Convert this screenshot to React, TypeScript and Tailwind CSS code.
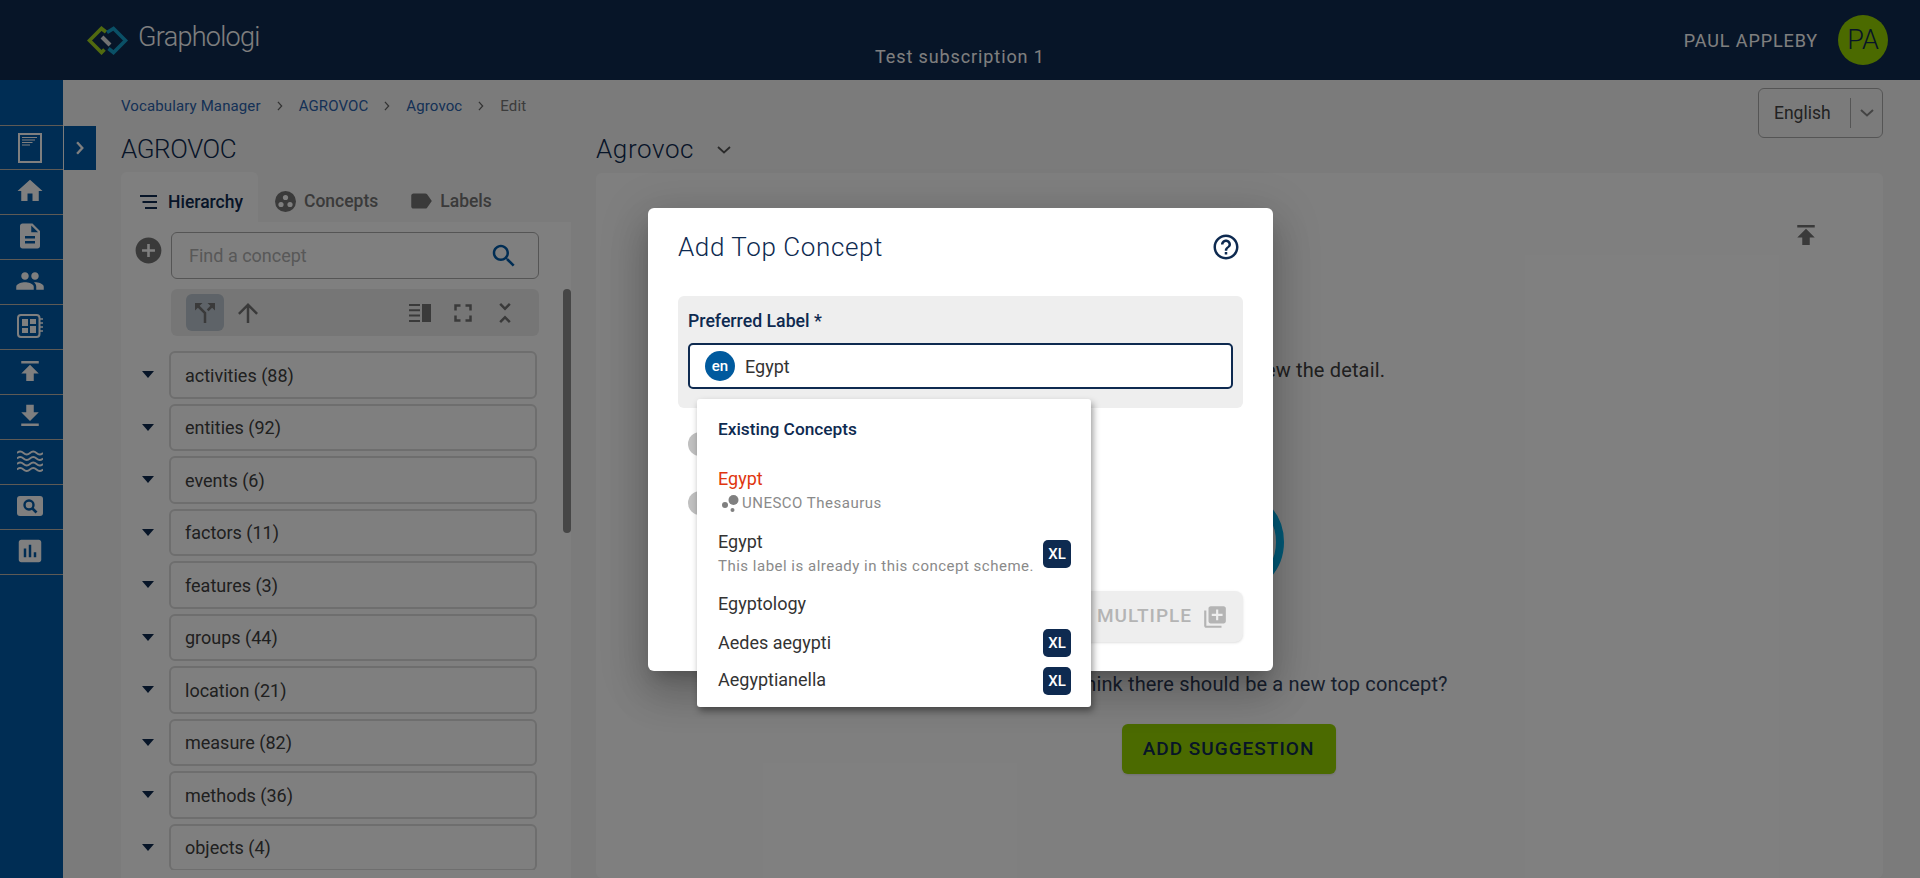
import type { ReactNode } from 'react'

const paths = {
  home: 'M10 20v-6h4v6h5v-8h3L12 3 2 12h3v8z',
  description:
    'M14 2H6c-1.1 0-2 .9-2 2v16c0 1.1.9 2 2 2h12c1.1 0 2-.9 2-2V8l-6-6zm2 16H8v-2h8v2zm0-4H8v-2h8v2zm-3-5V3.5L18.5 9H13z',
  people:
    'M16 11c1.66 0 2.99-1.34 2.99-3S17.66 5 16 5c-1.66 0-3 1.34-3 3s1.34 3 3 3zm-8 0c1.66 0 2.99-1.34 2.99-3S9.66 5 8 5C6.34 5 5 6.34 5 8s1.34 3 3 3zm0 2c-2.33 0-7 1.17-7 3.5V19h14v-2.5c0-2.33-4.67-3.5-7-3.5zm8 0c-.29 0-.62.02-.97.05 1.16.84 1.97 1.97 1.97 3.45V19h6v-2.5c0-2.33-4.67-3.5-7-3.5z',
  publish: 'M5 4v2h14V4H5zm0 10h4v6h6v-6h4l-7-7-7 7z',
  download: 'M19 9h-4V3H9v6H5l7 7 7-7zM5 18v2h14v-2H5z',
  chart:
    'M19 3H5c-1.1 0-2 .9-2 2v14c0 1.1.9 2 2 2h14c1.1 0 2-.9 2-2V5c0-1.1-.9-2-2-2zM9 17H7v-7h2v7zm4 0h-2V7h2v10zm4 0h-2v-4h2v4z',
  split: 'M14 4l2.29 2.29-2.88 2.88 1.42 1.42 2.88-2.88L20 10V4zm-4 0H4v6l2.29-2.29 4.71 4.7V20h2v-8.41l-5.29-5.3z',
  up: 'M4 12l1.41 1.41L11 7.83V20h2V7.83l5.58 5.59L20 12l-8-8-8 8z',
  fullscreen: 'M7 14H5v5h5v-2H7v-3zm-2-4h2V7h3V5H5v5zm12 7h-3v2h5v-5h-2v3zM14 5v2h3v3h2V5h-5z',
  unfold:
    'M7.41 18.59L8.83 20 12 16.83 15.17 20l1.41-1.41L12 14l-4.59 4.59zm9.18-13.17L15.17 4 12 7.17 8.83 4 7.41 5.41 12 10l4.59-4.59z',
  label:
    'M17.63 5.84C17.27 5.33 16.67 5 16 5L5 5.01C3.9 5.01 3 5.9 3 7v10c0 1.1.9 1.99 2 1.99L16 19c.67 0 1.27-.33 1.63-.84L22 12l-4.37-6.16z',
  search:
    'M15.5 14h-.79l-.28-.27C15.41 12.59 16 11.11 16 9.5 16 5.91 13.09 3 9.5 3S3 5.91 3 9.5 5.91 16 9.5 16c1.61 0 3.09-.59 4.23-1.57l.27.28v.79l5 4.99L20.49 19l-4.99-5zm-6 0C7.01 14 5 11.99 5 9.5S7.01 5 9.5 5 14 7.01 14 9.5 11.99 14 9.5 14z',
  add: 'M12 2C6.48 2 2 6.48 2 12s4.48 10 10 10 10-4.48 10-10S17.52 2 12 2zm5 11h-4v4h-2v-4H7v-2h4V7h2v4h4v2z',
  help: 'M11 18h2v-2h-2v2zm1-16C6.48 2 2 6.48 2 12s4.48 10 10 10 10-4.48 10-10S17.52 2 12 2zm0 18c-4.41 0-8-3.59-8-8s3.59-8 8-8 8 3.59 8 8-3.59 8-8 8zm0-14c-2.21 0-4 1.79-4 4h2c0-1.1.9-2 2-2s2 .9 2 2c0 2-3 1.75-3 5h2c0-2.25 3-2.5 3-5 0-2.21-1.79-4-4-4z',
  libraryAdd:
    'M4 6H2v14c0 1.1.9 2 2 2h14v-2H4V6zm16-4H8c-1.1 0-2 .9-2 2v12c0 1.1.9 2 2 2h12c1.1 0 2-.9 2-2V4c0-1.1-.9-2-2-2zm-1 9h-4v4h-2v-4H9V9h4V5h2v4h4v2z',
}

function Icon({ d, className }: { d: string; className?: string }) {
  return (
    <svg viewBox="0 0 24 24" fill="currentColor" className={className}>
      <path d={d} />
    </svg>
  )
}

function DocIcon() {
  return (
    <svg viewBox="0 0 24 30" className="h-[30px] w-6" fill="none" stroke="currentColor">
      <rect x="1" y="1" width="22" height="28" strokeWidth="2" />
      <path d="M4 4.5h15M4 7h13M4 9.5h10.500M4 12h8" strokeWidth="1.200" />
    </svg>
  )
}

function BoardIcon() {
  return (
    <svg viewBox="0 0 26 24" className="h-6 w-[26px]" fill="none">
      <rect x="1" y="1" width="21.500" height="22" rx="3" stroke="currentColor" strokeWidth="2" />
      <path d="M5 5h6v7H5zM5 14h6v5H5zM13 5h6v5h-6zM13 12h6v7h-6z" fill="currentColor" />
      <path d="M23 5h3M23 9h3M23 13h3M23 17h3" stroke="currentColor" strokeWidth="1.500" />
    </svg>
  )
}

function WavesIcon() {
  return (
    <svg viewBox="0 0 26 22" className="h-[22px] w-[26px]" fill="none" stroke="currentColor" strokeWidth="1.800">
      <path d="M0 3q3.250-3 6.500 0t6.500 0 6.500 0 6.500 0" />
      <path d="M0 8.500q3.250-3 6.500 0t6.500 0 6.500 0 6.500 0" />
      <path d="M0 14q3.250-3 6.500 0t6.500 0 6.500 0 6.500 0" />
      <path d="M0 19.500q3.250-3 6.500 0t6.500 0 6.500 0 6.500 0" />
    </svg>
  )
}

function SearchBoxIcon() {
  return (
    <svg viewBox="0 0 26 20" className="h-5 w-[26px]">
      <rect width="26" height="20" rx="3" fill="currentColor" />
      <circle cx="12" cy="9" r="4.500" fill="none" stroke="#005aa8" strokeWidth="2.400" />
      <path d="M15.500 12.500l4 4" stroke="#005aa8" strokeWidth="2.600" />
    </svg>
  )
}

function Logo() {
  return (
    <svg viewBox="0 0 41 29" className="h-[29px] w-[41px]" fill="none" strokeWidth="3.600">
      <path d="M19 6L14.500 2.500 2.500 14.500l12 12 3-3" stroke="#a2d420" />
      <path d="M20 6.500L26.500 2.500l12 12-12 12-5-4" stroke="#14a0cc" />
      <path d="M15 11l8 8" stroke="#e4e4e4" strokeWidth="4" />
    </svg>
  )
}

function Concepts3Icon() {
  return (
    <svg viewBox="0 0 21 21" className="h-[21px] w-[21px]">
      <circle cx="10.500" cy="10.500" r="10.500" fill="currentColor" />
      <circle cx="10.500" cy="6.500" r="2.600" fill="#ffffff" />
      <circle cx="6" cy="13.500" r="2.600" fill="#ffffff" />
      <circle cx="15" cy="13.500" r="2.600" fill="#ffffff" />
    </svg>
  )
}

function HierarchyIcon() {
  return (
    <svg viewBox="0 0 17 14" className="h-3.5 w-[17px]" fill="currentColor">
      <rect width="17" height="2" />
      <rect x="2.500" y="6" width="14.500" height="2" />
      <rect x="5" y="12" width="12" height="2" />
    </svg>
  )
}

function PaneIcon() {
  return (
    <svg viewBox="0 0 22 18" className="h-[18px] w-[22px]" fill="currentColor">
      <path d="M0 0h11v2H0zM0 5.300h11v2H0zM0 10.600h11v2H0zM0 16h11v2H0zM13 0h9v18h-9z" />
    </svg>
  )
}

function BubblesIcon() {
  return (
    <svg viewBox="0 0 17 17" className="h-[17px] w-[17px]" fill="#808080">
      <circle cx="11.500" cy="5" r="5" />
      <circle cx="3" cy="10" r="3" />
      <circle cx="10.500" cy="15" r="2" />
    </svg>
  )
}

function Chevron({ className, weight = 1.5 }: { className?: string; weight?: number }) {
  return (
    <svg viewBox="0 0 8 12" fill="none" stroke="currentColor" strokeWidth={weight} className={className}>
      <path d="M1.500 1l4.500 5-4.500 5" />
    </svg>
  )
}

const navItems: ReactNode[] = [
  <Icon d={paths.home} className="h-[30px] w-[30px]" />,
  <Icon d={paths.description} className="h-[30px] w-[30px]" />,
  <Icon d={paths.people} className="h-[30px] w-[30px]" />,
  <BoardIcon />,
  <Icon d={paths.publish} className="h-[30px] w-[30px]" />,
  <Icon d={paths.download} className="h-[30px] w-[30px]" />,
  <WavesIcon />,
  <SearchBoxIcon />,
  <Icon d={paths.chart} className="h-[30px] w-[30px]" />,
]

const treeItems = [
  'activities (88)',
  'entities (92)',
  'events (6)',
  'factors (11)',
  'features (3)',
  'groups (44)',
  'location (21)',
  'measure (82)',
  'methods (36)',
  'objects (4)',
]

function XlBadge() {
  return (
    <span className="flex h-7 w-7 shrink-0 items-center justify-center rounded-[5px] bg-[#0e2a50] text-[15px] font-medium text-white">
      XL
    </span>
  )
}

function Sidebar() {
  return (
    <aside className="w-[63px] shrink-0 bg-[#005aa8] pt-[45px] text-white">
      <div className="flex h-[45px] items-center justify-center border-y border-[#bdb4aa] pr-1">
        <DocIcon />
      </div>
      {navItems.map((icon, i) => (
        <div key={i} className="flex h-[45px] items-center justify-center border-b border-[#bdb4aa] pr-1 pb-[2px]">
          {icon}
        </div>
      ))}
    </aside>
  )
}

function Breadcrumb() {
  return (
    <nav className="mt-2 flex items-center text-[15px] leading-5 tracking-[0.12px] text-[#2a62ac]">
      <span>Vocabulary Manager</span>
      <Chevron className="mx-[15px] h-2.5 w-2 text-[#666666]" />
      <span>AGROVOC</span>
      <Chevron className="mx-[15px] h-2.5 w-2 text-[#666666]" />
      <span>Agrovoc</span>
      <Chevron className="mx-[15px] h-2.5 w-2 text-[#666666]" />
      <span className="text-[#787878]">Edit</span>
    </nav>
  )
}

function LeftPanel() {
  return (
    <section className="w-[450px] shrink-0">
      <h1 className="flex h-[46px] items-center text-[26px] font-light tracking-[-0.4px] text-[#0e2a50]">AGROVOC</h1>
      <div className="flex h-[50px] items-center text-[17.500px] font-medium text-[#747474]">
        <div className="flex h-full w-[137px] items-center rounded-t-md bg-white pt-2.5 pl-[19px] text-[#0e2a50]">
          <HierarchyIcon />
          <span className="ml-[11px]">Hierarchy</span>
        </div>
        <div className="ml-[17px] flex items-center pt-2">
          <Concepts3Icon />
          <span className="ml-2">Concepts</span>
        </div>
        <div className="ml-[30px] flex items-center pt-2">
          <Icon d={paths.label} className="h-[26px] w-[26px]" />
          <span className="ml-1.5">Labels</span>
        </div>
      </div>
      <div className="relative h-[656px] bg-white pt-2.5">
        <div className="absolute top-[67px] right-0 h-[244px] w-2 rounded-full bg-[#8c8c8c]" />
        <div className="flex items-start gap-[7px] pl-3">
          <Icon d={paths.add} className="mt-[3px] h-[31px] w-[31px] text-[#747474]" />
          <div className="flex h-[47px] w-[368px] items-center justify-between rounded-md border border-[#aaaaaa] pr-[19px] pl-[17px] text-[18px]">
            <span className="text-[#b0b0b0]">Find a concept</span>
            <Icon d={paths.search} className="h-[30px] w-[30px] text-[#005aa8]" />
          </div>
        </div>
        <div className="mt-2.5 ml-[50px] flex h-[47px] w-[368px] items-center rounded-md bg-[#ededed] pr-[19px] pl-[15px] text-[#747474]">
          <span className="flex h-[37px] w-[38px] items-center justify-center rounded-md bg-[#bcc6d0]">
            <Icon d={paths.split} className="h-[30px] w-[30px]" />
          </span>
          <Icon d={paths.up} className="ml-[9px] h-[30px] w-[30px]" />
          <span className="ml-auto flex h-[30px] w-[30px] items-center justify-center">
            <PaneIcon />
          </span>
          <Icon d={paths.fullscreen} className="ml-[13px] h-[30px] w-[30px]" />
          <Icon d={paths.unfold} className="ml-3 h-[30px] w-[30px]" />
        </div>
        <div className="mt-[15px] flex h-[519px] flex-col gap-[5px] overflow-hidden pl-[21px]">
          {treeItems.map((item) => (
            <div key={item} className="flex shrink-0 items-center">
              <span className="h-0 w-0 border-x-[6.5px] border-t-[7px] border-x-transparent border-t-[#0e2a50]" />
              <div className="ml-[15px] flex h-[47.5px] w-[368px] items-center rounded-md border-2 border-[#dcdcdc] px-[14px] pt-px text-[18px] text-[#404040]">
                {item}
              </div>
            </div>
          ))}
        </div>
      </div>
    </section>
  )
}

function RightPanel() {
  return (
    <section className="min-w-0 flex-1">
      <div className="flex h-[47px] items-center text-[26px] font-light tracking-[0.6px] text-[#0e2a50]">
        <span>Agrovoc</span>
        <svg viewBox="0 0 14 8" className="ml-[23px] h-2 w-3.5" fill="none" stroke="#555555" strokeWidth="1.800">
          <path d="M1 1l6 5.500L13 1" />
        </svg>
      </div>
      <div className="flex h-[705px] flex-col rounded-md bg-white pt-[47px]">
        <div className="flex justify-end pr-[62px]">
          <Icon d={paths.publish} className="h-[30px] w-[30px] text-[#747474]" />
        </div>
        <div className="flex flex-col items-center pr-[22px] text-center text-[20px] leading-7 tracking-[0.15px] text-[#404040]">
          <p className="mt-[106px]">Select a concept to view the detail.</p>
          <div className="mt-[104px] ml-[2px] h-[108px] w-[108px] rounded-full border-8 border-[#00b4f0]" />
          <p className="mt-[74px] ml-[2px] text-[#30405a]">Do you think there should be a new top concept?</p>
          <button className="mt-[26px] h-[50px] w-[214px] rounded-md bg-[#96d400] text-[19px] font-medium tracking-[1px] text-[#0e2a50] shadow-sm">
            ADD SUGGESTION
          </button>
        </div>
      </div>
    </section>
  )
}

function SuggestionsMenu() {
  return (
    <div className="absolute top-[191px] left-[49px] h-[308px] w-[394px] rounded-[3px] bg-white pt-5 pr-5 pl-[21px] shadow-[2px_4px_7px_rgba(0,0,0,0.4)]">
      <div className="mb-[30px] h-5 text-[17.300px] leading-5 font-medium text-[#0e2a50]">Existing Concepts</div>
      <div className="h-11 text-[18px]">
        <div className="leading-5 text-[#e0360f]">Egypt</div>
        <div className="mt-1 flex items-center text-[15px] leading-5 tracking-[0.5px] text-[#8a8a8a]">
          <span className="ml-1 flex">
            <BubblesIcon />
          </span>
          <span className="ml-[3px]">UNESCO Thesaurus</span>
        </div>
      </div>
      <div className="mt-[19px] flex h-11 items-center justify-between text-[18px]">
        <div>
          <div className="leading-5 text-[#333333]">Egypt</div>
          <div className="mt-1 text-[15px] leading-5 tracking-[0.5px] text-[#8a8a8a]">
            This label is already in this concept scheme.
          </div>
        </div>
        <XlBadge />
      </div>
      <div className="mt-[18px] text-[18px] leading-5 text-[#333333]">Egyptology</div>
      <div className="mt-[15px] flex h-7 items-center justify-between text-[18px] text-[#333333]">
        <span className="-mt-[2px]">Aedes aegypti</span>
        <XlBadge />
      </div>
      <div className="mt-2.5 flex h-7 items-center justify-between text-[18px] text-[#333333]">
        <span className="-mt-[3px]">Aegyptianella</span>
        <XlBadge />
      </div>
    </div>
  )
}

function AddDialog() {
  return (
    <div className="absolute top-[208px] left-[648px] h-[463px] w-[625px] rounded-md bg-white px-[30px] shadow-[0_11px_15px_-7px_rgba(0,0,0,0.2),0_24px_38px_3px_rgba(0,0,0,0.14),0_9px_46px_8px_rgba(0,0,0,0.12)]">
      <div className="flex h-[88px] items-start justify-between pt-[21px]">
        <h2 className="text-[26px] leading-9 font-light tracking-[0.6px] text-[#0e2a50]">Add Top Concept</h2>
        <Icon d={paths.help} className="mt-[3px] mr-[2px] h-[30px] w-[30px] text-[#0e2a50]" />
      </div>
      <div className="h-28 rounded-md bg-[#eeeeee] px-2.5 pt-[15px]">
        <div className="text-[17.700px] leading-5 font-medium text-[#0e2a50]">Preferred Label *</div>
        <div className="mt-3 flex h-[46px] items-center rounded-[5px] border-2 border-[#0e2a50] bg-white pl-[15px]">
          <span className="flex h-[30px] w-[30px] items-center justify-center rounded-full bg-[#005a9e] text-[15px] font-medium text-white">
            en
          </span>
          <span className="ml-2.5 text-[18px] text-[#333333]">Egypt</span>
        </div>
      </div>
      <div className="mt-6 ml-2.5 h-6 w-6 rounded-full bg-[#c0c0c0]" />
      <div className="mt-[35px] ml-2.5 h-6 w-6 rounded-full bg-[#c0c0c0]" />
      <div className="mt-[76px] flex justify-end">
        <button className="flex h-[51px] w-[260px] items-center justify-end rounded-lg bg-[#eeeeee] pr-[15px] text-[19px] font-medium tracking-[1px] text-[#b4b4b4] shadow-sm">
          ADD MULTIPLE
          <Icon d={paths.libraryAdd} className="ml-[10px] h-[26px] w-[26px]" />
        </button>
      </div>
      <SuggestionsMenu />
    </div>
  )
}

export default function App() {
  return (
    <div className="relative flex h-[878px] flex-col overflow-hidden bg-[#f7f7f7] font-['Roboto',sans-serif]">
      <header className="relative flex h-20 shrink-0 items-center bg-[#0e2a50] pr-8 pl-[87px] text-white">
        <Logo />
        <span className="mb-[5px] ml-[10px] text-[27px] font-light tracking-[-0.7px]">Graphologi</span>
        <span className="absolute bottom-[10px] left-[875px] text-[18px] tracking-[0.9px]">Test subscription 1</span>
        <span className="ml-auto text-[18px] tracking-[0.9px]">PAUL APPLEBY</span>
        <span className="ml-5 flex h-[50px] w-[50px] items-center justify-center rounded-full bg-[#96d400] text-[27px] font-light text-[#0e2a50]">
          PA
        </span>
      </header>
      <div className="flex min-h-0 flex-1">
        <Sidebar />
        <main className="relative flex-1 pr-[37px] pl-[58px]">
          <button className="absolute top-[46px] left-px flex h-11 w-8 items-center justify-center bg-[#005aa8] text-white">
            <Chevron className="h-3.5 w-2.5" weight={2} />
          </button>
          <div className="flex h-[46px] items-start justify-between pt-2">
            <Breadcrumb />
            <div className="flex h-[50px] w-[125px] shrink-0 items-center rounded-md border border-[#aaaaaa] bg-[#f7f7f7] text-[17.500px] text-[#444444]">
              <span className="w-[91px] pl-[15px]">English</span>
              <span className="h-[30px] w-px bg-[#aaaaaa]" />
              <svg viewBox="0 0 14 8" className="ml-[9px] h-2 w-3.5" fill="none" stroke="#888888" strokeWidth="2">
                <path d="M1 1l6 5.500L13 1" />
              </svg>
            </div>
          </div>
          <div className="flex gap-[25px]">
            <LeftPanel />
            <RightPanel />
          </div>
        </main>
      </div>
      <div className="absolute inset-0 bg-black/50">
        <AddDialog />
      </div>
    </div>
  )
}
